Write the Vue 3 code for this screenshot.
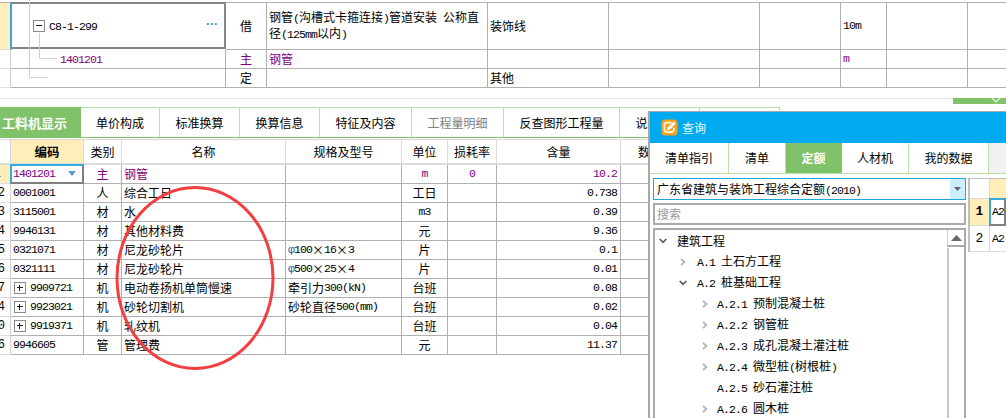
<script setup>
const runs = (text) => {
  const parts = String(text).match(/[\x20-\x7e]+|φ|[^\x20-\x7eφ]+/g) || []
  return parts.map((t) => ({
    t,
    c: /^[\x20-\x7e]/.test(t) ? 'lat' : t === 'φ' ? 'phi' : 'cjk'
  }))
}

const topRows = [
  { kind: 'sel', code: 'C8-1-299', type: '借', name: '钢管(沟槽式卡箍连接)管道安装 公称直径(125mm以内)', group: '装饰线', unit: '10m' },
  { kind: 'main', code: '1401201', type: '主', name: '钢管', group: '', unit: 'm' },
  { kind: 'plain', code: '', type: '定', name: '', group: '其他', unit: '' }
]

const tabs = [
  { t: '工料机显示', c: 'on', w: 81 },
  { t: '单价构成', w: 79 },
  { t: '标准换算', w: 80 },
  { t: '换算信息', w: 80 },
  { t: '特征及内容', w: 92 },
  { t: '工程量明细', c: 'off', w: 92 },
  { t: '反查图形工程量', w: 116 },
  { t: '说明信息', w: 80 },
  { t: '', w: 80 }
]

const heads = [
  { t: '', c: 'num' },
  { t: '编码', c: 'key' },
  { t: '类别' },
  { t: '名称' },
  { t: '规格及型号' },
  { t: '单位' },
  { t: '损耗率' },
  { t: '含量' },
  { t: '数量', c: 'lastHead' }
]

const rows = [
  { n: 1, code: '1401201', type: '主', name: '钢管', spec: '', unit: 'm', loss: '0', qty: '10.2', main: true },
  { n: 2, code: '0001001', type: '人', name: '综合工日', spec: '', unit: '工日', loss: '', qty: '0.738' },
  { n: 3, code: '3115001', type: '材', name: '水', spec: '', unit: 'm3', loss: '', qty: '0.39' },
  { n: 4, code: '9946131', type: '材', name: '其他材料费', spec: '', unit: '元', loss: '', qty: '9.36' },
  { n: 5, code: '0321071', type: '材', name: '尼龙砂轮片', spec: 'φ100×16×3', unit: '片', loss: '', qty: '0.1' },
  { n: 6, code: '0321111', type: '材', name: '尼龙砂轮片', spec: 'φ500×25×4', unit: '片', loss: '', qty: '0.01' },
  { n: 7, code: '9909721', plus: true, type: '机', name: '电动卷扬机单筒慢速', spec: '牵引力300(kN)', unit: '台班', loss: '', qty: '0.08' },
  { n: 4, code: '9923021', plus: true, type: '机', name: '砂轮切割机', spec: '砂轮直径500(mm)', unit: '台班', loss: '', qty: '0.02' },
  { n: 0, code: '9919371', plus: true, type: '机', name: '轧纹机', spec: '', unit: '台班', loss: '', qty: '0.04' },
  { n: 6, code: '9946605', type: '管', name: '管理费', spec: '', unit: '元', loss: '', qty: '11.37' }
]

const dlgTabs = [
  { t: '清单指引', w: 79 },
  { t: '清单', w: 57 },
  { t: '定额', w: 56, on: true },
  { t: '人材机', w: 67 },
  { t: '我的数据', w: 80 }
]

const tree = [
  { t: '建筑工程', lv: 0, ch: 'open' },
  { t: 'A.1 土石方工程', lv: 1, ch: 'shut' },
  { t: 'A.2 桩基础工程', lv: 1, ch: 'open' },
  { t: 'A.2.1 预制混凝土桩', lv: 2, ch: 'shut' },
  { t: 'A.2.2 钢管桩', lv: 2, ch: 'shut' },
  { t: 'A.2.3 成孔混凝土灌注桩', lv: 2, ch: 'shut' },
  { t: 'A.2.4 微型桩(树根桩)', lv: 2, ch: 'shut' },
  { t: 'A.2.5 砂石灌注桩', lv: 2, ch: '' },
  { t: 'A.2.6 圆木桩', lv: 2, ch: 'shut' }
]
</script>

<template>
  <div class="page">
    <section class="top">
      <div v-for="r in topRows" :key="r.type" class="top-row" :class="r.kind">
        <div class="c gutter"></div>
        <div class="c tree-cell">
          <span v-if="r.kind === 'sel'" class="box minus"></span>
          <span class="text"><span v-for="(p, i) in runs(r.code)" :key="i" :class="p.c">{{ p.t }}</span></span>
          <span v-if="r.kind === 'sel'" class="dots">···</span>
        </div>
        <div class="c mid">{{ r.type }}</div>
        <div class="c name"><span><span v-for="(p, i) in runs(r.name)" :key="i" :class="p.c">{{ p.t }}</span></span></div>
        <div class="c pad">{{ r.group }}</div>
        <div class="c"></div>
        <div class="c"></div>
        <div class="c pad"><span class="lat">{{ r.unit }}</span></div>
        <div class="c"></div>
        <div class="c end"></div>
      </div>
      <svg class="links" width="70" height="90" viewBox="0 0 70 90">
        <path d="M29.5 0V77.5H47M39.5 33V58.5H57" fill="none" stroke="#cfcfcf" />
      </svg>
    </section>

    <div class="rule">
      <div class="collapse">
        <svg width="10" height="6" viewBox="0 0 10 6"><path d="M1 0L5 4L9 0" fill="none" stroke="#d8efd0" stroke-width="1.5" /></svg>
      </div>
    </div>

    <nav class="tabs">
      <div v-for="t in tabs" :key="t.w + t.t" class="tab" :class="t.c" :style="{ width: t.w + 'px' }">{{ t.t }}</div>
    </nav>

    <section class="grid">
      <div class="g-row head">
        <div v-for="h in heads" :key="h.t" class="g" :class="h.c">{{ h.t }}</div>
      </div>
      <div v-for="(r, ri) in rows" :key="r.code" class="g-row" :class="{ main: r.main }">
        <div class="g num" :class="{ first: ri === 0 }"><span class="bare">{{ r.n }}</span></div>
        <div class="g code" :class="{ cur: ri === 0 }">
          <span v-if="r.plus" class="box plus"></span>
          <span class="lat">{{ r.code }}</span>
          <svg v-if="ri === 0" class="drop" width="10" height="6" viewBox="0 0 10 6"><path d="M1 0H9L5 5Z" fill="#5b9bc4" /></svg>
        </div>
        <div class="g ctr">{{ r.type }}</div>
        <div class="g left">{{ r.name }}</div>
        <div class="g left"><span v-for="(p, i) in runs(r.spec)" :key="i" :class="p.c">{{ p.t }}</span></div>
        <div class="g ctr"><span v-for="(p, i) in runs(r.unit)" :key="i" :class="p.c">{{ p.t }}</span></div>
        <div class="g ctr"><span class="lat">{{ r.loss }}</span></div>
        <div class="g right"><span class="lat">{{ r.qty }}</span></div>
        <div class="g tail"></div>
      </div>
    </section>

    <svg class="circle" width="1006" height="418" viewBox="0 0 1006 418">
      <ellipse cx="195" cy="278" rx="78" ry="90.5" fill="none" stroke="#f23f42" stroke-width="3" />
    </svg>

    <aside class="dialog">
      <header class="title">
        <svg class="logo" width="17" height="17" viewBox="0 0 17 17">
          <rect x="0.5" y="0.5" width="16" height="16" rx="3.5" fill="#f7a21b" />
          <path d="M10.5 3.6H6C4.4 3.6 3.4 4.6 3.4 6.2V10.6C3.4 12.2 4.4 13.2 6 13.2H10.4C12 13.2 13 12.2 13 10.6V8.8" fill="none" stroke="#fff" stroke-width="1.7" opacity=".9" />
          <path d="M5.6 11.6L6.6 8.6L12.6 2.4L14.8 4.4L8.8 10.6Z" fill="#fff" />
        </svg>
        <span>查询</span>
      </header>
      <div class="dlg-tabs">
        <div v-for="t in dlgTabs" :key="t.t" class="dlg-tab" :class="{ on: t.on }" :style="{ width: t.w + 'px' }">{{ t.t }}</div>
      </div>
      <div class="dlg-body">
        <div class="side">
          <div class="combo">
            <span class="combo-text"><span v-for="(p, i) in runs('广东省建筑与装饰工程综合定额(2010)')" :key="i" :class="p.c">{{ p.t }}</span></span>
            <span class="combo-btn"><svg width="7" height="4" viewBox="0 0 7 4"><path d="M0 0H7L3.5 4Z" fill="#666" /></svg></span>
          </div>
          <div class="search">搜索</div>
          <div class="tree">
            <div class="tree-list">
              <div v-for="n in tree" :key="n.t" class="node" :class="'lv' + n.lv">
                <span class="chev">
                  <svg v-if="n.ch === 'open'" width="8" height="6" viewBox="0 0 8 6"><path d="M0.7 1L4 4.3L7.3 1" fill="none" stroke="#555" stroke-width="1.6" /></svg>
                  <svg v-else-if="n.ch === 'shut'" width="8" height="8" viewBox="0 0 8 8"><path d="M2 0.8L5.4 4L2 7.2" fill="none" stroke="#b4b4b4" stroke-width="1.8" /></svg>
                </span>
                <span><span v-for="(p, i) in runs(n.t)" :key="i" :class="p.c">{{ p.t }}</span></span>
              </div>
            </div>
            <div class="scroll">
              <div class="up"><svg width="11" height="6" viewBox="0 0 11 6"><path d="M0 6H11L5.5 0Z" fill="#666" /></svg></div>
              <div class="track"></div>
            </div>
          </div>
        </div>
        <div class="result">
          <div class="res-row res-head"><div class="rn"></div><div class="rc key"></div></div>
          <div class="res-row r1"><div class="rn sel">1</div><div class="rc cur"><span class="lat">A2-1</span></div></div>
          <div class="res-row r2"><div class="rn">2</div><div class="rc"><span class="lat">A2-1</span></div></div>
        </div>
      </div>
    </aside>
  </div>
</template>

<style scoped>
.page {
  position: relative;
  width: 1006px;
  height: 418px;
  overflow: hidden;
  padding-top: 2px;
  box-sizing: border-box;
  background: #fff;
  color: #000;
  font: 12px/14px "Noto Sans CJK SC", sans-serif;
}
.lat {
  font-family: "Liberation Mono", monospace;
  font-size: 11.5px;
  letter-spacing: -0.9px;
  white-space: pre-wrap;
}
.phi { color: #1d5c9c; font-family: "Liberation Mono", monospace; font-size: 11.5px; letter-spacing: -0.9px; }

/* upper table */
.top { position: relative; border-top: 1px solid #b0b0b0; }
.top-row {
  display: grid;
  grid-template-columns: 11px 215px 41px 221px 121px 151px 81px 46px 81px 1fr;
  height: 19px;
}
.top-row.sel { height: 47px; }
.c {
  display: flex;
  align-items: center;
  box-sizing: border-box;
  border-right: 1px solid #b0b0b0;
  border-bottom: 1px solid #b0b0b0;
  min-width: 0;
}
.c.end { border-right: 0; }
.gutter { border-right-color: #cfcfcf; border-bottom-color: #dedede; }
.sel .gutter { background: #fff0c2; border-right: 2px solid #35a9dd; margin-right: -1px; }
.tree-cell { padding-left: 38px; position: relative; }
.sel .tree-cell {
  padding-left: 22px;
  border: 2px solid #868686;
  border-left: 0;
  margin: -1px 0 0 0;
  height: 47px;
}
.main .tree-cell { padding-left: 49px; }
.main, .main .lat { color: #800080; }
.sel .box { margin-right: 4px; }
.dots {
  position: absolute;
  right: 6px;
  top: 13px;
  color: #3b8fd0;
  font-weight: 700;
  font-family: "Liberation Sans", sans-serif;
  letter-spacing: 0;
}
.mid { justify-content: center; }
.name { padding: 0 2px; line-height: 14px; }
.pad { padding-left: 2px; }
.links { position: absolute; left: 0; top: -3px; pointer-events: none; }

.box {
  position: relative;
  flex: none;
  width: 12px;
  height: 12px;
  box-sizing: border-box;
  border: 1px solid #8a8a8a;
  background: #fff;
}
.box::before {
  content: "";
  position: absolute;
  left: 2px;
  top: 4px;
  width: 6px;
  height: 1px;
  background: #222;
}
.plus::after {
  content: "";
  position: absolute;
  left: 4px;
  top: 2px;
  width: 1px;
  height: 6px;
  background: #222;
}

.rule {
  position: relative;
  height: 1px;
  margin-top: 10px;
  border-top: 1px solid #e2e2e2;
  display: flex;
  justify-content: flex-end;
}
.collapse {
  width: 53px;
  height: 6px;
  margin-top: -1px;
  background: #80c26a;
  display: flex;
  justify-content: flex-end;
  padding-right: 5px;
  box-sizing: border-box;
}

/* tab strip */
.tabs {
  display: flex;
  height: 31px;
  margin-top: 7px;
  box-sizing: border-box;
  border-bottom: 1px solid #80c26a;
}
.tab {
  display: flex;
  align-items: center;
  justify-content: center;
  box-sizing: border-box;
  border-top: 1px solid #b9e2a6;
  border-right: 1px solid #b9e2a6;
  white-space: nowrap;
  overflow: hidden;
}
.tab.on {
  background: #80c26a;
  color: #fff;
  font-weight: 700;
  font-size: 13px;
  justify-content: flex-start;
  padding-left: 2px;
  border-color: #80c26a;
}
.tab.off { color: #808080; }

/* lower table */
.grid { margin-top: 1px; }
.g-row {
  display: grid;
  grid-template-columns: 11px 73px 38px 164px 116px 46px 49px 124px 1fr;
  height: 19px;
}
.g-row.head {
  height: 26px;
  border-top: 1px solid #dcdcdc;
  box-sizing: border-box;
}
.g {
  display: flex;
  align-items: center;
  box-sizing: border-box;
  border-right: 1px solid #b0b0b0;
  border-bottom: 1px solid #b0b0b0;
  overflow: hidden;
  white-space: nowrap;
  min-width: 0;
}
.head .g {
  justify-content: center;
  border-right-color: #dcdcdc;
  border-bottom-color: #dcdcdc;
  border-bottom-width: 2px;
}
.head .key { background: #ffeeba; font-weight: 700; font-size: 12.5px; }
.head .lastHead { justify-content: flex-start; padding-left: 17px; border-right: 0; }
.g.num {
  justify-content: flex-end;
  padding-right: 5px;
  border-right-color: #d0d0d0;
  border-bottom-color: #dcdcdc;
  font-family: "Liberation Mono", monospace;
  font-size: 12px;
}
.g.first { background: #ffeeba; padding-right: 9px; font-weight: 700; }
.bare { flex: none; }
.code { padding-left: 2px; position: relative; }
.code .plus { margin: 0 4px 0 1px; }
.cur {
  border-top: 2px solid #35a9dd;
  border-left: 2px solid #35a9dd;
  border-right: 2px solid #808080;
  border-bottom: 2px solid #808080;
  margin: -1px 0 0 -1px;
  padding-left: 1px;
}
.drop { position: absolute; right: 5px; top: 5px; }
.ctr { justify-content: center; }
.left { padding-left: 2px; }
.right { justify-content: flex-end; padding-right: 3px; }
.tail { border-right: 0; }
.g-row.main .g:not(.num), .g-row.main .lat { color: #800080; }

.circle { position: absolute; left: 0; top: 0; pointer-events: none; }

/* query window */
.dialog {
  position: absolute;
  left: 648px;
  top: 111px;
  right: 0;
  bottom: 0;
  display: flex;
  flex-direction: column;
  background: #fff;
  border-top: 1px solid #a8a8a8;
  border-left: 2px solid #a8a8a8;
}
.title {
  flex: none;
  height: 31px;
  display: flex;
  align-items: center;
  gap: 4px;
  padding-left: 11px;
  background: #00aaf0;
  color: #eaf8ff;
}
.dlg-tabs {
  flex: none;
  height: 31px;
  box-sizing: border-box;
  display: flex;
  background: #f1f1f1;
  border-bottom: 1px solid #b9e2a6;
}
.dlg-tab {
  display: flex;
  align-items: center;
  justify-content: center;
  box-sizing: border-box;
  background: #fff;
  border-right: 1px solid #b9e2a6;
}
.dlg-tab.on { background: #80c26a; color: #fff; font-weight: 700; border-color: #80c26a; }
.dlg-body { flex: 1; min-height: 0; display: flex; gap: 2px; padding-left: 3px; }
.side {
  width: 313px;
  flex: none;
  padding-top: 4px;
  display: flex;
  flex-direction: column;
  gap: 3px;
  box-sizing: border-box;
}
.combo {
  flex: none;
  height: 22px;
  box-sizing: border-box;
  border: 1px solid #1ea5e0;
  display: flex;
  justify-content: space-between;
  align-items: stretch;
}
.combo-text { padding-left: 3px; line-height: 19px; }
.combo-btn {
  width: 15px;
  background: #cdeefc;
  display: flex;
  align-items: center;
  justify-content: center;
}
.search {
  flex: none;
  height: 22px;
  box-sizing: border-box;
  border: 2px solid #aaa;
  padding-left: 2px;
  line-height: 18px;
  color: #9a9a9a;
}
.tree {
  flex: 1;
  min-height: 0;
  display: flex;
  border: 2px solid #aaa;
  border-bottom: 0;
  overflow: hidden;
}
.tree-list { flex: 1; min-width: 0; }
.node { display: flex; align-items: center; height: 21px; white-space: nowrap; }
.lv0 { padding-left: 4px; }
.lv1 { padding-left: 24px; }
.lv2 { padding-left: 46px; }
.lv2 .chev { width: 16px; }
.chev { width: 18px; flex: none; display: flex; align-items: center; }
.scroll { width: 17px; flex: none; display: flex; flex-direction: column; background: #fff; }
.up {
  flex: none;
  height: 17px;
  box-sizing: border-box;
  border-left: 1px solid #d0d0d0;
  border-bottom: 2px solid #aaa;
  display: flex;
  align-items: center;
  justify-content: center;
}
.track { flex: 1; margin-top: 1px; border-left: 2px solid #c8c8c8; }
.result {
  flex: 1;
  min-width: 0;
  overflow: hidden;
  padding-top: 4px;
  align-self: flex-start;
}
.res-row { display: flex; border-left: 2px solid #c0c0c0; box-sizing: border-box; }
.res-head { height: 21px; border-top: 1px solid #c0c0c0; }
.r1 { height: 27px; }
.r2 { height: 26px; }
.rn {
  width: 20px;
  flex: none;
  display: flex;
  align-items: center;
  justify-content: center;
  box-sizing: border-box;
  border-right: 1px solid #dcdcdc;
  border-bottom: 1px solid #dcdcdc;
  font-family: "Liberation Mono", monospace;
  font-size: 13px;
}
.rn.sel { background: #ffeeba; font-weight: 700; }
.rc {
  flex: 1;
  min-width: 0;
  display: flex;
  align-items: center;
  padding-left: 2px;
  box-sizing: border-box;
  border-bottom: 1px solid #dcdcdc;
  white-space: nowrap;
  overflow: hidden;
}
.rc .lat { white-space: pre; }
.rc.key { background: #ffeeba; border-bottom: 0; }
.rc.cur {
  border-top: 2px solid #35a9dd;
  border-left: 2px solid #35a9dd;
  border-bottom: 2px solid #808080;
  padding-left: 1px;
}
</style>

<style>
html, body { margin: 0; overflow: hidden; background: #fff; }
</style>
